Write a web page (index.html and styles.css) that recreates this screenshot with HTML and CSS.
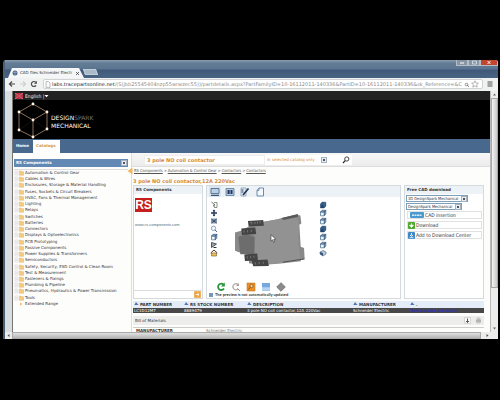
FILE: index.html
```html
<!DOCTYPE html>
<html lang="en">
<head>
<meta charset="utf-8">
<title>CAD files Schneider Electric</title>
<link rel="stylesheet" href="styles.css">
</head>
<body>
<svg class="defs" aria-hidden="true">
  <symbol id="folder" viewBox="0 0 10 6"><rect x="1" y="1" width="3" height="4" fill="#fff" stroke="#d8cfc8" stroke-width=".6"/><path d="M1.7 3h1.7" stroke="#999" stroke-width=".5"/><path d="M5.5 1h1.6l.5.7h2V5.3H5.5z" fill="#f5cb83" stroke="#dba75a" stroke-width=".4"/></symbol>
  <symbol id="sort" viewBox="0 0 5 5"><path d="M.3 4 2 1l1 1.200L4.700 4z" fill="#5276b0"/></symbol>
  <symbol id="cube" viewBox="0 0 8 8"><path d="M1.500 3h3.800v3.800H1.500z" fill="#eef4f9" stroke="#54789a" stroke-width=".8"/><path d="M1.500 3 3 1.300h3.800L5.300 3zM5.300 3l1.500-1.700V5L5.300 6.800z" fill="#7fa3c1" stroke="#2f5275" stroke-width=".6"/></symbol>
  <symbol id="cubefull" viewBox="0 0 8 8"><path d="M1.500 3 3 1.200h3.800V5L5.300 6.900H1.500z" fill="#204a78" stroke="#15365a" stroke-width=".5"/><path d="M1.500 3h3.800l1.500-1.800M5.300 3v3.800" fill="none" stroke="#7fa0bf" stroke-width=".4"/></symbol>
</svg>
<div class="window">
  <header class="titlebar">
    <div class="tab">
      <svg class="globe" viewBox="0 0 6 6"><circle cx="3" cy="3" r="2.500" fill="#52698a"/><path d="M1 2.500h4M3 .7v4.600" stroke="#a9bbd0" stroke-width=".5"/></svg>
      <span class="tab-title">CAD files Schneider Electr</span>
      <button class="tab-close" aria-label="Close tab"><svg viewBox="0 0 5 5"><path d="m1 1 3 3m0-3-3 3" stroke="#444" stroke-width=".8"/></svg></button>
    </div>
    <button class="new-tab" aria-label="New tab"></button>
    <div class="caption">
      <button aria-label="Minimize"><svg viewBox="0 0 10 5"><path d="M3 3h4" stroke="#fff"/></svg></button>
      <button aria-label="Restore"><svg viewBox="0 0 10 5"><path d="M3.500 1h4v3h-4z" fill="none" stroke="#e6ecf2" stroke-width=".7"/></svg></button>
      <button class="quit" aria-label="Close"><svg viewBox="0 0 10 5"><path d="m3.500 1 3 3m0-3-3 3" stroke="#fff" stroke-width=".9"/></svg></button>
    </div>
  </header>
  <div class="toolbar">
    <button aria-label="Back"><svg viewBox="0 0 8 8"><path d="M7 4H1.500M4 1.500 1.500 4 4 6.500" fill="none" stroke="#4b4b4b" stroke-width="1.200"/></svg></button>
    <button aria-label="Forward"><svg viewBox="0 0 8 8"><path d="M1 4h5.500M4 1.500 6.500 4 4 6.500" fill="none" stroke="#cfcfcf" stroke-width="1.200"/></svg></button>
    <button aria-label="Reload"><svg viewBox="0 0 8 8"><path d="M6 5.400A2.500 2.500 0 1 1 5.700 2.200" fill="none" stroke="#4b4b4b" stroke-width="1.200"/><path d="M6.900.8v3H4z" fill="#4b4b4b"/></svg></button>
    <div class="address">
      <svg class="doc" viewBox="0 0 6 7"><path d="M1 .6h2.600L5 2v4.400H1z" fill="#fff" stroke="#8d8d8d" stroke-width=".6"/></svg>
      <span class="url"><b>labs.tracepartsonline.net</b>/(S(jbb25545404nzp55wrwzec55))/partdetails.aspx?PartFamilyID=10-16112011-140336&amp;PartID=10-16112011-140336&amp;sk_Reference=&amp;C</span>
      <svg class="star" viewBox="0 0 16 8"><circle cx="2.500" cy="4.500" r="1.300" fill="none" stroke="#777" stroke-width=".8"/><path d="m3.500 5.500 1.200 1" stroke="#444"/><path d="m11 .8 1 2.200 2.400.2-1.800 1.600.6 2.400L11 5.900 8.800 7.200l.6-2.400-1.800-1.600L10 3z" fill="#fff" stroke="#888" stroke-width=".6"/></svg>
    </div>
    <button aria-label="Menu"><svg viewBox="0 0 8 8"><path d="M1.500 2h5M1.500 4h5M1.500 6h5" stroke="#555" stroke-width="1.200"/></svg></button>
  </div>
  <div class="viewport">
    <div class="page">
      <div class="lang">
        <svg class="flag" viewBox="0 0 8 6"><path d="M0 0h8v6H0z" fill="#a8283a"/><path d="m0 0 8 6M8 0 0 6" stroke="#e2b5bd" stroke-width=".6"/><path d="M4 0v6M0 3h8" stroke="#d34454"/></svg>
        <button>English |<svg viewBox="0 0 5 5"><path d="M.5 2h4L2.500 4.300z" fill="#fff"/></svg></button>
      </div>
      <div class="brand">
        <svg class="logo" viewBox="0 0 34 38"><path d="M17 2 31 10v17L17 35 3 28V10zM3 10l14 8 14-8M17 18v17" fill="none" stroke="#9b7b61" stroke-width=".9"/><path d="m3 28 14-10 14 9" fill="none" stroke="#35281e" stroke-width=".4"/><g fill="#fff4e6"><circle cx="17" cy="2" r="1.400"/><circle cx="31" cy="10" r="1.400"/><circle cx="31" cy="27" r="1.400"/><circle cx="17" cy="35" r="1.400"/><circle cx="3" cy="28" r="1.400"/><circle cx="3" cy="10" r="1.400"/><circle cx="17" cy="18" r="1.400"/></g></svg>
        <div class="brand-name"><div><b>DESIGN</b><span>SPARK</span></div><b>MECHANICAL</b></div>
      </div>
      <nav class="nav"><a href="#">Home</a><a href="#" class="active">Catalogs</a></nav>
      <div class="columns">
        <aside class="side">
          <div class="side-head"><span>RS Components</span><button aria-label="Choose catalog"></button></div>
          <ul class="tree">
            <li><svg><use href="#folder"/></svg>Automation &amp; Control Gear</li>
            <li><svg><use href="#folder"/></svg>Cables &amp; Wires</li>
            <li><svg><use href="#folder"/></svg>Enclosures, Storage &amp; Material Handling</li>
            <li><svg><use href="#folder"/></svg>Fuses, Sockets &amp; Circuit Breakers</li>
            <li><svg><use href="#folder"/></svg>HVAC, Fans &amp; Thermal Management</li>
            <li><svg><use href="#folder"/></svg>Lighting</li>
            <li><svg><use href="#folder"/></svg>Relays</li>
            <li><svg><use href="#folder"/></svg>Switches</li>
            <li><svg><use href="#folder"/></svg>Batteries</li>
            <li><svg><use href="#folder"/></svg>Connectors</li>
            <li><svg><use href="#folder"/></svg>Displays &amp; Optoelectronics</li>
            <li><svg><use href="#folder"/></svg>PCB Prototyping</li>
            <li><svg><use href="#folder"/></svg>Passive Components</li>
            <li><svg><use href="#folder"/></svg>Power Supplies &amp; Transformers</li>
            <li><svg><use href="#folder"/></svg>Semiconductors</li>
            <li><svg><use href="#folder"/></svg>Safety, Security, ESD Control &amp; Clean Room</li>
            <li><svg><use href="#folder"/></svg>Test &amp; Measurement</li>
            <li><svg><use href="#folder"/></svg>Fasteners &amp; Fixings</li>
            <li><svg><use href="#folder"/></svg>Plumbing &amp; Pipeline</li>
            <li><svg><use href="#folder"/></svg>Pneumatics, Hydraulics &amp; Power Transmission</li>
            <li><svg><use href="#folder"/></svg>Tools</li>
            <li><svg viewBox="0 0 10 6"><path d="M6 1.500 8.500 3 6 4.500z" fill="#f4b968"/></svg>Extended Range</li>
          </ul>
        </aside>
        <main class="main">
          <form class="search">
            <input class="query" aria-label="Search" value="3 pole NO coil contactor">
            <label class="scope"><select aria-label="Search scope"><option>in selected catalog only</option></select><i></i></label>
            <button type="button" aria-label="Search"><svg viewBox="0 0 8 8"><circle cx="4.800" cy="3" r="2.100" fill="#fff" stroke="#333" stroke-width=".9"/><path d="M3.200 4.600 1 7" stroke="#222" stroke-width="1.200"/></svg></button>
          </form>
          <div class="crumbs"><svg viewBox="0 0 6 8"><path d="M5.500.5v7L.5 4z" fill="#f0b65c"/></svg><a href="#">RS Components</a> &gt; <a href="#">Automation &amp; Control Gear</a> &gt; <a href="#">Contactors</a> &gt; <a href="#">Contactors</a></div>
          <h1>3 pole NO coil contactor,12A 220Vac</h1>
          <div class="panels">
            <section class="panel maker">
              <h2>RS Components</h2>
              <div class="maker-body"><div class="rs">RS</div><a href="#">www.rs-components.com</a></div>
              <button class="go" aria-label="Next"><svg viewBox="0 0 8 8"><path d="M.5.5h7v7h-7z" fill="#f0a23a" stroke="#d78d27" stroke-width=".5"/><path d="M2 4h3.500M4 2.300 5.800 4 4 5.700" fill="none" stroke="#fff"/></svg></button>
            </section>
            <section class="panel viewer">
              <div class="modes">
                <button class="on" aria-label="Preview"><svg viewBox="0 0 10 10"><path d="M1 1.500h8v5H1z" fill="#b9d0e8" stroke="#46627f" stroke-width=".8"/><path d="M1 8.300h8" stroke="#3b5675" stroke-width="1.200"/></svg></button>
                <button aria-label="3D view"><svg viewBox="0 0 10 10"><path d="M1 1.500h8v7H1z" fill="#b7cde3" stroke="#5b7898" stroke-width=".8"/><path d="M2.500 3h2.200v4H2.500zM5.500 3h2v4h-2z" fill="#23395e"/></svg></button>
                <button aria-label="Edit drawing"><svg viewBox="0 0 10 10"><path d="M1 1h5v8H1z" fill="#e7eff8" stroke="#7890ac" stroke-width=".7"/><path d="M3 8 8.500 1.500" stroke="#1d3558" stroke-width="1.700"/><path d="M1.500 3h2M1.500 5h2" stroke="#1d3558"/></svg></button>
                <button aria-label="Document"><svg viewBox="0 0 10 10"><path d="M4 1h4.500v8H2V3.500z" fill="#f5f9fd" stroke="#5e7fa8" stroke-width=".9"/><path d="M4 1v2.500H2" fill="none" stroke="#5e7fa8" stroke-width=".8"/></svg></button>
              </div>
              <div class="stage">
                <div class="tools">
                  <svg viewBox="0 0 8 8"><path d="m1.500 1 3.500 3-1.500.3.8 1.700" fill="none" stroke="#444" stroke-width=".8"/><path d="M4 1.500h3v5H4" fill="none" stroke="#6a7b6a" stroke-width=".8"/></svg>
                  <svg viewBox="0 0 8 8"><path d="M4 1v6M1 4h6" stroke="#26365c" stroke-width="1.300"/><path d="m4 .5 1.500 1.800h-3zM4 7.500l1.500-1.800h-3z" fill="#26365c"/></svg>
                  <svg viewBox="0 0 8 8"><path d="M1 1.500h6v5H1z" fill="#8a9bb0"/><path d="m1.500 6 5-4m-5 0 5 4" stroke="#26365c" stroke-width=".8"/></svg>
                  <svg viewBox="0 0 8 8"><circle cx="3.500" cy="3.300" r="2.200" fill="#f0f6fb" stroke="#7391ac" stroke-width=".8"/><path d="m5 5 2 2" stroke="#516a83"/></svg>
                  <svg><use href="#cube"/></svg>
                  <svg viewBox="0 0 8 8"><path d="M1.500 1.500v5l5-3.500z" fill="#9aa8b3" stroke="#333" stroke-width=".8"/><path d="M3.500 6.500h3" stroke="#333"/></svg>
                  <svg viewBox="0 0 8 8"><path d="M1.500 4v3h5V4z" fill="#efc15a" stroke="#705429" stroke-width=".6"/><path d="M.7 4 4 1l3.300 3" fill="none" stroke="#5a3b25"/></svg>
                </div>
                <div class="model">
                  <svg class="part" viewBox="100 60 220 180"><path d="M158 100 225 88l60-14 12 2 3 24-6 4 4 66 10 4 2 34-72 11-60 6-36-5v-25l-30-8-27-10-5-43 38-12z" fill="#898989"/><path d="m158 100 67-12 60-14 8 30-2 60 8 50-60 7-58 4-20-30z" fill="#929292"/><path d="m240 84 50-12-1 9-44 9z" fill="#595959"/><path d="m110 140 25-7 24 8-1 52-42 0z" fill="#6d6d6d"/><path d="m139 93 46-3 2 17-46 2zM119 115l42-3 3 20-43 3zM128 194l39-3 2 21-39 1zM150 212l48-3 4 19-47 1z" fill="#444"/><path d="m145 98 6-1v6m9-8v7m8-8v7m8-8v7M127 121v7m11-8v7m11-8v7M137 199v7m10-8v7m10-8v7M161 217v7m12-8v7m12-8v7" fill="none" stroke="#8d8d8d" stroke-width="2"/><path d="m244 217 65-10" stroke="#505050" stroke-width="3"/></svg>
                  <svg class="cursor" viewBox="0 0 7 9"><path d="M1 .7v6.500l1.600-1.400 1.200 2.500 1-.6-1.100-2.300 2-.2z" fill="#fff" stroke="#333" stroke-width=".6"/></svg>
                </div>
                <div class="tools">
                  <svg><use href="#cubefull"/></svg><svg><use href="#cube"/></svg><svg><use href="#cube"/></svg><svg><use href="#cubefull"/></svg><svg><use href="#cube"/></svg><svg><use href="#cube"/></svg>
                  <svg viewBox="0 0 8 8"><path d="m1 3 3-1.500L7 3v2L4 7 1 5z" fill="#b9cadb" stroke="#44607d" stroke-width=".6"/><path d="M4 4v3L1 5V3z" fill="#365679"/></svg>
                </div>
              </div>
              <div class="actions">
                <button aria-label="Refresh"><svg viewBox="0 0 10 10"><path d="M7.500 2.500A3.200 3.200 0 1 0 8 6.500" fill="none" stroke="#26963a" stroke-width="1.800"/><path d="M8.800.5v4H5z" fill="#26963a"/></svg></button>
                <button aria-label="Automatic refresh"><svg viewBox="0 0 10 10"><path d="M7 2.500A3 3 0 1 0 7 7" fill="none" stroke="#b3aaa5" stroke-width="1.300"/><path d="M8 1v3H5z" fill="#a59b96"/><path d="M6.500 6.500 9 9" stroke="#a87c70"/></svg></button>
                <button aria-label="Zoom"><svg viewBox="0 0 10 10"><path d="M1 1h8v8H1z" fill="#e8912c" stroke="#c97818" stroke-width=".6"/><circle cx="5.500" cy="4" r="1.700" fill="#f7c98c" stroke="#8c4d10" stroke-width=".7"/><path d="M4.200 5.300 2.500 7.500" stroke="#8c4d10"/></svg></button>
                <button aria-label="Background"><svg viewBox="0 0 10 10"><path d="M1 1h8v8H1z" fill="#75a9df"/><path d="M1 5h8v4H1z" fill="#a5c9ed"/><path d="M1 7h8" stroke="#d8e9f8" stroke-width=".7"/></svg></button>
                <button aria-label="Material"><svg viewBox="0 0 10 10"><path d="m5 .7 4.300 4.300L5 9.300.7 5z" fill="#8b8b8b" stroke="#676767" stroke-width=".7"/></svg></button>
              </div>
              <div class="note"><i></i>The preview is not automatically updated</div>
            </section>
            <section class="panel download">
              <h2>Free CAD download</h2>
              <div class="formats">
                <label class="pick wide"><select aria-label="Format"><option>3D DesignSpark Mechanical</option></select><i></i></label>
                <label class="pick"><select aria-label="Version"><option>DesignSpark Mechanical</option></select><i></i></label>
              </div>
              <button class="act"><svg class="badge" viewBox="0 0 14 6"><rect width="14" height="6" rx="1" fill="#4a9ad2"/><path d="M2 3.300h10" stroke="#d5ecfa" stroke-width="1.400" stroke-dasharray="2 .5"/></svg>CAD insertion</button>
              <button class="act"><svg viewBox="0 0 7 7"><rect width="7" height="7" rx="1" fill="#4fa72d"/><path d="M3.500 1.200v3M1.500 3.200l2 2.400 2-2.400z" stroke="#fff" stroke-width=".7" fill="#fff"/></svg>Download</button>
              <button class="act"><svg viewBox="0 0 7 7"><rect width="7" height="7" rx="1" fill="#3f88c4"/><path d="M3.500 1v2.500M2 3l1.500 1.500L5 3M1.500 5.700h4" stroke="#d9ecfa" fill="none"/></svg>Add to Download Center</button>
            </section>
          </div>
          <table class="parts">
            <colgroup><col class="c1"><col class="c2"><col class="c3"><col class="c4"><col></colgroup>
            <thead><tr><th><svg><use href="#sort"/></svg>PART NUMBER</th><th><svg><use href="#sort"/></svg>RS STOCK NUMBER</th><th><svg><use href="#sort"/></svg>DESCRIPTION</th><th><svg><use href="#sort"/></svg>MANUFACTURER</th><th><svg><use href="#sort"/></svg>.</th></tr></thead>
            <tbody><tr><td>LC1D12M7</td><td>8889479</td><td>3 pole NO coil contactor,12A 220Vac</td><td>Schneider Electric</td><td><a href="#">Technical data and details</a></td></tr></tbody>
          </table>
          <div class="bom"><span>Bill of Materials</span>
            <button aria-label="Expand"><svg viewBox="0 0 7 7"><path d="M.5.5h6v6h-6z" fill="#f8f8f8" stroke="#bbb" stroke-width=".5"/><path d="M3.500 1.500v4M2 4l1.500 1.500L5 4" fill="none" stroke="#444" stroke-width=".9"/></svg></button>
            <button aria-label="Print"><svg viewBox="0 0 7 7"><rect x="1" y="2.500" width="5" height="3" rx="1" fill="#b5b5b5"/><path d="M2 1h3v1.500H2zM2 4.500h3V6H2z" fill="#eee" stroke="#888" stroke-width=".4"/></svg></button>
          </div>
          <dl class="detail"><dt>MANUFACTURER</dt><dd>Schneider Electric</dd></dl>
        </main>
      </div>
    </div>
    <div class="vscroll"><svg viewBox="0 0 7 7"><path d="m3.500 2.500 1.500 2H2z" fill="#666"/></svg><div class="thumb"></div><svg viewBox="0 0 7 7"><path d="M3.500 4.500 2 2.500h3z" fill="#666"/></svg></div>
  </div>
  <div class="hscroll"><svg viewBox="0 0 7 7"><path d="m2.500 3.500 2-1.500v3z" fill="#555"/></svg><div class="thumb"></div><svg viewBox="0 0 7 7"><path d="m4.500 3.500-2-1.500v3z" fill="#555"/></svg></div>
</div>
</body>
</html>
```

FILE: styles.css
```css
* { box-sizing: border-box; }
body {
  margin: 0;
  min-height: 100vh;
  padding: 60px 2px 60px 3px;
  background: #000;
  font: 4px/6px "DejaVu Sans", sans-serif;
  color: #333;
}
svg { display: block; flex: none; }
.defs { width: 0; height: 0; position: absolute; }
button, input, select {
  appearance: none;
  margin: 0;
  padding: 0;
  border: 0;
  border-radius: 0;
  background: none;
  font: inherit;
  color: inherit;
}
a { color: inherit; }
h1, h2, ul, dl, dd { margin: 0; padding: 0; }

/* browser window */
.window { border-radius: 3px 3px 0 0; overflow: hidden; background: #d9dde0; border-left: 2px solid #4b6076; }
.titlebar {
  display: flex;
  align-items: flex-end;
  height: 18px;
  padding-left: 3px;
  background: linear-gradient(#8b9eb0 0, #647d96 3px, #5b7591 9px, #40597a 10px, #4a6483);
}
.tab {
  display: flex;
  align-items: center;
  gap: 2px;
  width: 76px;
  height: 10px;
  padding: 0 4px;
  background: #f4f6f7;
  clip-path: polygon(4px 0, 71px 0, 76px 100%, 0 100%);
  font: 4px/8px "DejaVu Sans", sans-serif;
}
.globe { width: 6px; height: 6px; }
.tab-title { flex: 1; white-space: nowrap; }
.tab-close svg { width: 5px; height: 5px; }
.new-tab { width: 13px; height: 6px; margin-bottom: 3px; background: #a9bac9; border: 1px solid #c3d0db; transform: skewX(20deg); }
.caption { display: flex; align-self: flex-start; margin-left: auto; width: 42px; }
.caption button { flex: 1; height: 6px; background: #8796a6; border: 1px solid #b4bec8; border-top: 0; }
.caption .quit { flex: 2; background: #c2452f; }
.caption svg { height: 5px; width: 10px; margin: auto; }
.toolbar {
  display: flex;
  align-items: center;
  gap: 3px;
  height: 13px;
  padding: 0 4px 1px 3px;
  background: #f0f1f1;
}
.toolbar button svg { width: 8px; height: 8px; }
.address {
  display: flex;
  align-items: center;
  flex: 1;
  gap: 1px;
  min-width: 0;
  height: 10px;
  margin-left: 2px;
  padding: 0 2px 0 1px;
  background: #fff;
  border: 1px solid #d0d2d3;
  border-radius: 2px;
}
.doc { width: 6px; height: 7px; }
.url { flex: 1; white-space: nowrap; font: 5px/8px "DejaVu Sans", sans-serif; color: #8b8b8b; }
.url b { font-weight: 400; color: #222; }
.star { width: 16px; height: 8px; }

.viewport { display: flex; margin-left: 7px; border-left: 1px solid #777; }
.page { flex: 1; min-width: 0; background: #fdfdfc; }
.vscroll, .hscroll { display: flex; background: #ececec; }
.vscroll { flex-direction: column; width: 8px; border-left: 1px solid #bbb; }
.vscroll svg, .hscroll svg { width: 7px; height: 7px; }
.vscroll .thumb { height: 190px; margin-bottom: auto; background: linear-gradient(90deg, #f4f4f4, #c9c9c9); border: 1px solid #a8a8a8; }
.hscroll { height: 7px; padding-right: 7px; }
.hscroll .thumb { flex: 1; margin-right: 3px; background: linear-gradient(#e0e0e0, #b5b5b5); border: 1px solid #aaa; }

/* site header */
.lang { display: flex; align-items: center; gap: 2px; height: 9px; padding-left: 2px; background: #222; color: #eee; }
.lang button { display: flex; align-items: center; font: 5px/6px "DejaVu Sans Condensed", "DejaVu Sans", sans-serif; }
.lang button svg { width: 5px; height: 5px; }
.flag { width: 8px; height: 6px; }
.brand { display: flex; align-items: center; gap: 1px; height: 39px; padding: 2px 0 0 3px; background: #000; color: #fff; }
.logo { width: 34px; height: 38px; }
.brand-name { padding-top: 2px; font: 6px/8px "DejaVu Sans", sans-serif; }
.brand-name b { font-weight: 400; }
.brand-name span { color: #777; }
.nav { display: flex; height: 14px; padding-top: 1px; background: #48698d; }
.nav a { padding: 0 4px 0 3px; font: bold 4px/12px "DejaVu Sans", sans-serif; color: #fff; text-decoration: none; }
.nav .active { background: #fff; color: #d29a50; }

.columns { display: flex; }
.side { width: 119px; padding: 6px 3px 0 1px; border-right: 1px solid #ddd; }
.side-head {
  display: flex;
  align-items: center;
  justify-content: space-between;
  height: 8px;
  padding: 0 1px 0 2px;
  background: #6189b3;
  font-weight: 700;
  color: #fff;
}
.side-head button, .scope i, .pick i {
  flex: none;
  width: 6px;
  height: 6px;
  background: linear-gradient(#555, #555) center / 2px 2px no-repeat #e8edf3;
  border: 1px solid #a5b3c2;
}
.tree {
  display: flex;
  flex-direction: column;
  justify-content: space-between;
  min-height: 138px;
  margin-top: 2px;
  border-top: 1px solid #ddd;
  list-style: none;
  white-space: nowrap;
}
.tree li { display: flex; gap: 1px; }
.tree svg { width: 10px; height: 6px; }

.main { flex: 1; min-width: 0; padding-right: 6px; }
.search {
  display: flex;
  align-items: center;
  height: 14px;
  margin-right: -6px;
  padding-left: 12px;
  background: linear-gradient(#f7f7f7, #ececec);
  border-bottom: 1px solid #ddd;
  color: #d38a40;
}
.query { width: 121px; height: 10px; padding: 0 2px; background: #fff; border: 1px solid #eee; font-size: 5px; font-weight: 700; }
.scope { display: flex; align-items: center; width: 64px; height: 10px; padding: 0 2px; background: #fff; }
.scope select, .pick select { flex: 1; min-width: 0; }
.search button { width: 23px; height: 10px; padding-left: 13px; background: #fff; }
.search button svg { width: 8px; height: 8px; }
.crumbs { display: flex; align-items: center; gap: 1px; height: 8px; color: #555; font-family: "DejaVu Sans Condensed", "DejaVu Sans", sans-serif; }
.crumbs svg { width: 6px; height: 8px; margin-left: -5px; }
h1 { padding: 3px 0 1px 1px; font-size: 5px; line-height: 6px; color: #d38a40; }

.panels { display: grid; grid-template-columns: 70px 1fr 80px; gap: 3px; padding-left: 1px; min-height: 114px; }
.panel { display: flex; flex-direction: column; min-width: 0; background: #fff; border: 1px solid #d3dbe1; }
.panel h2 { padding: 1px 2px; background: #edf2f6; font-size: 4px; line-height: 6px; }
.maker-body { padding: 4px 1px; }
.rs { width: 17px; height: 14px; margin-bottom: 10px; background: #c4201c; color: #fff; font: bold 12px/14px "Liberation Sans", sans-serif; text-align: center; }
.maker-body a { color: #4b7180; text-decoration: none; font-family: "Liberation Sans", sans-serif; }
.go { margin-top: auto; padding: 0 1px; border-top: 1px solid #ddd; }
.go svg { width: 7px; height: 7px; margin-left: auto; }
.modes { display: flex; align-items: center; gap: 3px; height: 11px; padding-left: 2px; background: #edf2f6; }
.modes button { width: 12px; height: 11px; padding: 0 1px; }
.modes .on { background: #d9e5f1; }
.modes svg, .actions svg { width: 10px; height: 10px; }
.stage { display: grid; grid-template-columns: 8px 1fr 8px; flex: 1; padding: 4px 73px 0 3px; }
.tools { display: flex; flex-direction: column; }
.tools svg { width: 8px; height: 8px; }
.model { position: relative; padding: 9px 0 0 17px; }
.part { width: 73px; height: 60px; }
.cursor { position: absolute; left: 52px; top: 33px; width: 7px; height: 9px; }
.actions { display: flex; gap: 5px; padding-left: 9px; }
.note { display: flex; align-items: center; gap: 2px; padding-left: 2px; font-family: Lato, sans-serif; font-weight: 700; }
.note i { width: 4px; height: 4px; background: #7597bb; }
.download .act { margin: 0 1px 2px 2px; }
.formats { margin: 1px 1px 0 1px; }
.pick { display: flex; align-items: center; width: 56px; height: 7px; margin-bottom: 1px; padding-left: 1px; border: 1px solid #7da0b8; font-family: "DejaVu Sans Condensed", "DejaVu Sans", sans-serif; }
.wide { width: 62px; }
.act { display: flex; align-items: center; gap: 1px; height: 8px; border: 1px solid #e1e1e1; font: 5px/6px "DejaVu Sans Condensed", "DejaVu Sans", sans-serif; text-align: left; white-space: nowrap; }
.act svg { width: 7px; height: 7px; }
.act .badge { width: 14px; height: 6px; margin-left: 2px; }

.parts { width: calc(100% - 1px); margin: 2px 0 0 1px; border-collapse: collapse; table-layout: fixed; }
.c1 { width: 50px; }
.c2 { width: 63px; }
.c3 { width: 106px; }
.c4 { width: 57px; }
.parts th, .parts td { padding: 0 1px; text-align: left; white-space: nowrap; overflow: hidden; }
.parts th { height: 7px; background: #e4edf7; }
.parts th svg { display: inline-block; width: 5px; height: 5px; margin-right: 1px; }
.parts td { height: 5px; line-height: 5px; background: #484848; color: #fff; }
.parts td a { color: #2424e8; font-family: "DejaVu Sans Condensed", "DejaVu Sans", sans-serif; }
.bom { display: flex; align-items: center; gap: 4px; height: 9px; margin: 3px 0 2px 1px; padding: 0 2px; background: #ededeb; }
.bom span { flex: 1; }
.bom svg { width: 7px; height: 7px; }
.detail { display: flex; height: 5px; margin-left: 1px; padding: 0 3px; overflow: hidden; border-top: 1px solid #ccc; font-weight: 700; }
.detail dt { width: 70px; }
.detail dd { font-weight: 400; color: #777; }
```
